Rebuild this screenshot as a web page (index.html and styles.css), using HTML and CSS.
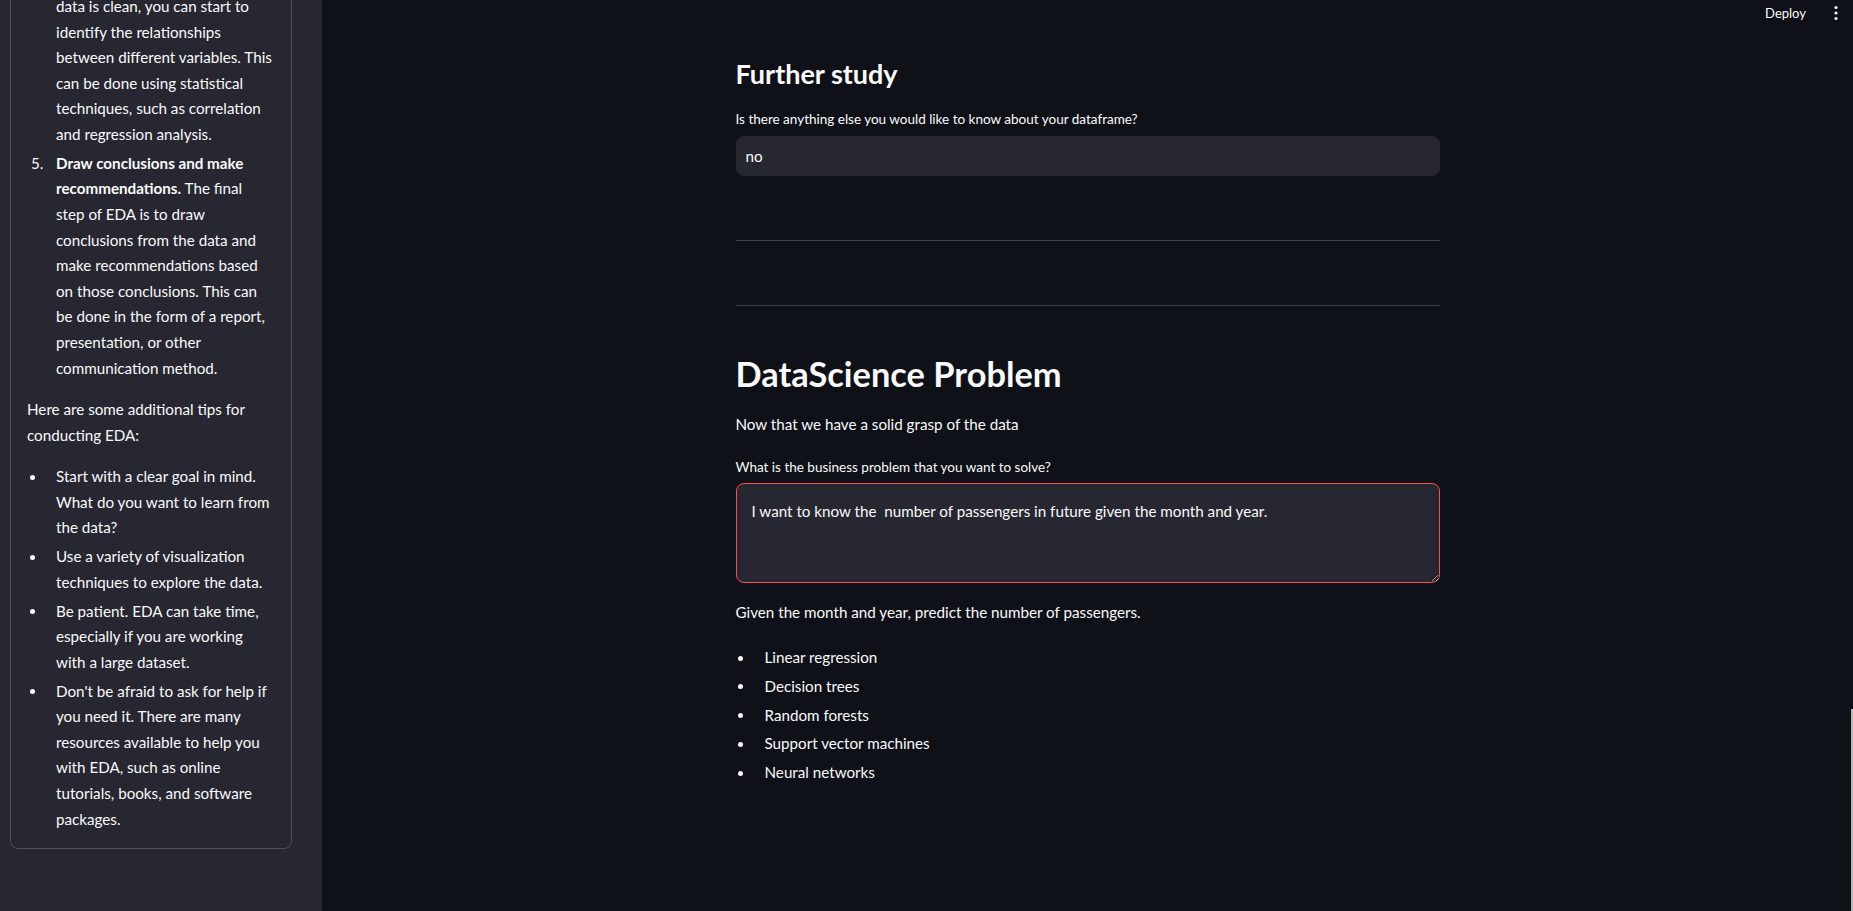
FILE: index.html
```html
<!DOCTYPE html>
<html lang="en">
<head>
<meta charset="utf-8">
<title>DataScience Problem</title>
<link rel="stylesheet" href="styles.css">
</head>
<body>
<div class="app">
  <aside class="sidebar">
    <div class="box">
      <ol class="steps">
        <li class="cont">data is clean, you can start to<br>identify the relationships<br>between different variables. This<br>can be done using statistical<br>techniques, such as correlation<br>and regression analysis.</li>
        <li class="num" data-n="5."><b>Draw conclusions and make<br>recommendations.</b> The final<br>step of EDA is to draw<br>conclusions from the data and<br>make recommendations based<br>on those conclusions. This can<br>be done in the form of a report,<br>presentation, or other<br>communication method.</li>
      </ol>
      <p class="side-p">Here are some additional tips for<br>conducting EDA:</p>
      <ul class="tips">
        <li>Start with a clear goal in mind.<br>What do you want to learn from<br>the data?</li>
        <li>Use a variety of visualization<br>techniques to explore the data.</li>
        <li>Be patient. EDA can take time,<br>especially if you are working<br>with a large dataset.</li>
        <li>Don't be afraid to ask for help if<br>you need it. There are many<br>resources available to help you<br>with EDA, such as online<br>tutorials, books, and software<br>packages.</li>
      </ul>
    </div>
  </aside>
  <main class="main">
    <header class="topbar">
      <span class="deploy">Deploy</span>
      <svg class="kebab" width="4" height="16" viewBox="0 0 4 16"><circle cx="2" cy="2.5" r="1.6" fill="#fafafa"/><circle cx="2" cy="8" r="1.6" fill="#fafafa"/><circle cx="2" cy="13.5" r="1.6" fill="#fafafa"/></svg>
    </header>
    <div class="content">
      <h3 class="h3">Further study</h3>
      <label class="lbl lbl-1">Is there anything else you would like to know about your dataframe?</label>
      <input class="inp" type="text" value="no" readonly>
      <hr class="hr hr-1">
      <hr class="hr hr-2">
      <h2 class="h2">DataScience Problem</h2>
      <p class="p p-1">Now that we have a solid grasp of the data</p>
      <label class="lbl lbl-2">What is the business problem that you want to solve?</label>
      <textarea class="ta" readonly>I want to know the  number of passengers in future given the month and year.</textarea>
      <p class="p p-2">Given the month and year, predict the number of passengers.</p>
      <ul class="models">
        <li>Linear regression</li>
        <li>Decision trees</li>
        <li>Random forests</li>
        <li>Support vector machines</li>
        <li>Neural networks</li>
      </ul>
    </div>
    <div class="scroll-thumb"></div>
  </main>
</div>
</body>
</html>
```
FILE: styles.css
```css
* { box-sizing: border-box; }
html, body {
  margin: 0;
  padding: 0;
  height: 100%;
  overflow: hidden;
  background: #0e1117;
}
body {
  font-family: "Source Sans Pro", Lato, "Noto Sans", sans-serif;
  font-size: 15.2px;
  color: #fafafa;
}
.app {
  display: flex;
  height: 911px;
}
.sidebar {
  width: 322px;
  flex: 0 0 322px;
  background: #262730;
  padding-left: 10px;
  overflow: hidden;
}
.box {
  width: 282px;
  margin-top: -23px;
  border: 1px solid #505158;
  border-radius: 8px;
  padding: 16px 0 16px 16px;
}
.box ol, .box ul, .box p { margin: 0; padding: 0; list-style: none; }
.box li, .side-p {
  line-height: 25.6px;
  white-space: nowrap;
}
.steps { margin-bottom: 16px !important; }
.steps li, .tips li {
  position: relative;
  padding-left: 29px;
}
.steps li + li, .tips li + li { margin-top: 3.2px; }
.steps .num::before {
  content: attr(data-n);
  position: absolute;
  left: 4px;
  top: 0;
}
.side-p { margin-bottom: 16px !important; }
.tips li::before {
  content: "";
  position: absolute;
  left: 2.5px;
  top: 10.5px;
  width: 5px;
  height: 5px;
  border-radius: 50%;
  background: #fafafa;
}
.main {
  flex: 1;
  position: relative;
  display: flex;
  justify-content: center;
}
.topbar {
  position: absolute;
  top: 0;
  right: 0;
  height: 25px;
  display: flex;
  align-items: center;
  gap: 28px;
  padding-right: 15px;
}
.deploy {
  font-size: 13px;
  line-height: 20px;
}
.kebab { display: block; margin-top: 1px; }
.content {
  width: 704px;
  padding-top: 57px;
}
.h3 {
  margin: 0;
  font-size: 27px;
  line-height: 34px;
  font-weight: 700;
}
.lbl {
  display: block;
  font-size: 13.5px;
  line-height: 22px;
}
.lbl-1 { margin-top: 17px; }
.inp {
  display: block;
  width: 100%;
  height: 40px;
  margin-top: 6px;
  background: #262730;
  border: 1px solid #262730;
  border-radius: 8px;
  color: #fafafa;
  font: inherit;
  padding: 0 9px;
  outline: none;
}
.hr {
  border: 0;
  height: 1px;
  background: #3d4044;
  margin: 0;
}
.hr-1 { margin-top: 64px; }
.hr-2 { margin-top: 64px; }
.h2 {
  margin: 47.4px 0 0;
  font-size: 34.4px;
  line-height: 42px;
  font-weight: 700;
}
.p {
  margin: 0;
  line-height: 25.6px;
}
.p-1 { margin-top: 16.8px; }
.lbl-2 { margin-top: 18px; }
.ta {
  display: block;
  width: 100%;
  height: 100px;
  margin-top: 5.5px;
  background: #262730;
  border: 1px solid #ff4b4b;
  border-radius: 8px;
  color: #fafafa;
  font: inherit;
  line-height: 25.6px;
  padding: 15px 15px;
  outline: none;
}
.p-2 { margin-top: 17px; }
.models {
  list-style: none;
  margin: 19.2px 0 0;
  padding: 0;
}
.models li {
  position: relative;
  padding-left: 29px;
  line-height: 25.6px;
}
.models li + li { margin-top: 3.2px; }
.models li::before {
  content: "";
  position: absolute;
  left: 2px;
  top: 10.5px;
  width: 5px;
  height: 5px;
  border-radius: 50%;
  background: #fafafa;
}
.scroll-thumb {
  position: absolute;
  right: 0;
  top: 709px;
  width: 2px;
  height: 202px;
  background: #b8b8b8;
}
```
